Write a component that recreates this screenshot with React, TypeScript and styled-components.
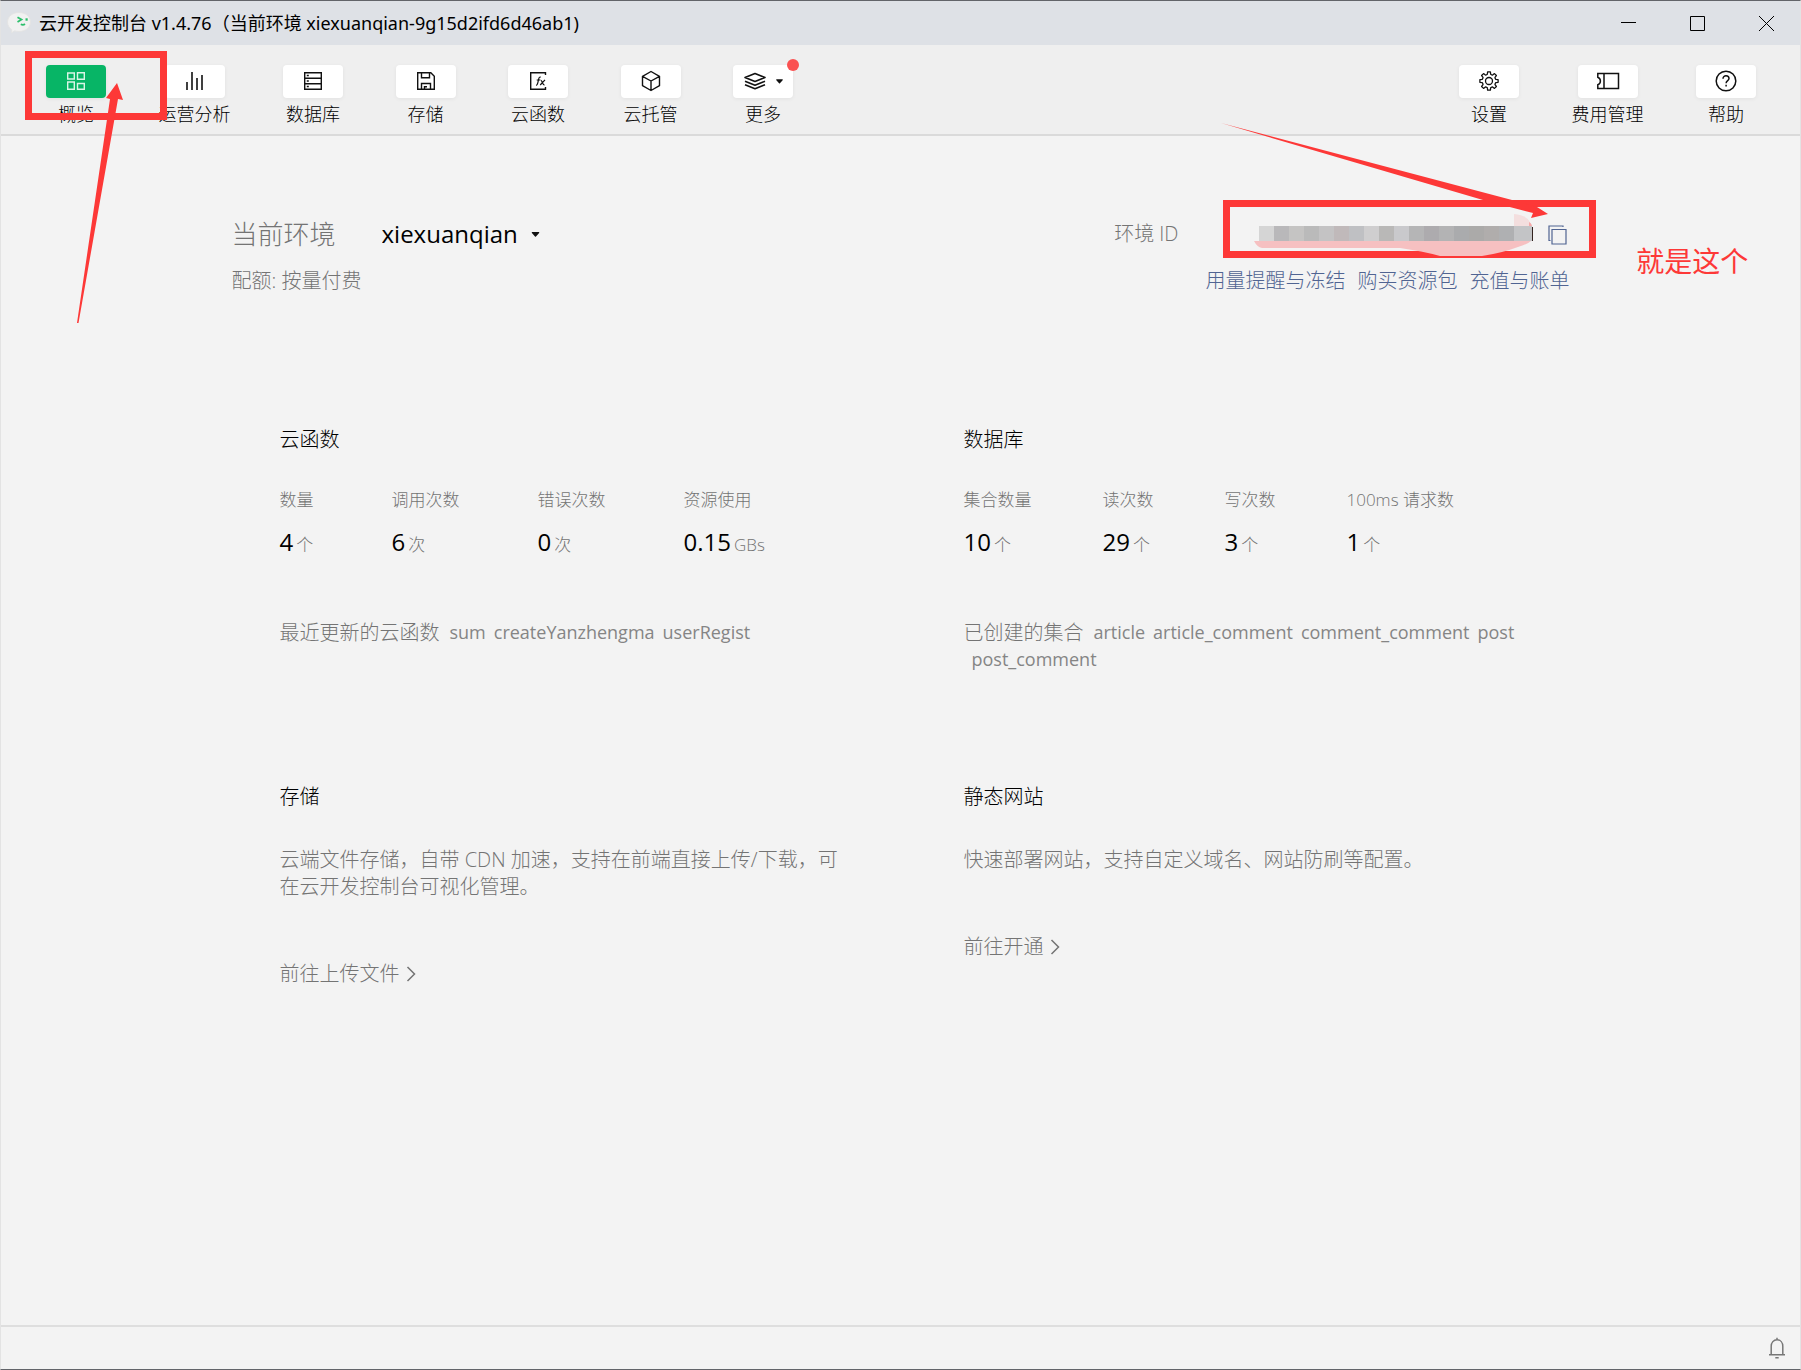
import React from "react";
import styled, { createGlobalStyle } from "styled-components";

const ink = "#000000";
const muted = "#747474";
const link = "#506492";
const mark = "#fd3837";

const GlobalStyle = createGlobalStyle`
  *, *::before, *::after { box-sizing: border-box; }
  body {
    margin: 0;
    background: #f3f3f3;
    color: ${ink};
    font-family: "Open Sans", "Noto Sans CJK SC", sans-serif;
    font-weight: 300;
  }
  button, select {
    border: 0;
    padding: 0;
    background: none;
    color: inherit;
    font: inherit;
    appearance: none;
  }
  h2, p, dl, dd { margin: 0; }
  svg { display: block; overflow: visible; }
`;

const Window = styled.div`
  position: relative;
  display: flex;
  flex-direction: column;
  min-height: 100vh;
  border: 1px solid #e3e3e3;
  border-top-color: #626469;
  border-bottom-color: #626469;
  overflow: hidden;
`;

const TitleBar = styled.header`
  display: flex;
  align-items: center;
  height: 44px;
  padding-left: 6px;
  background: #dee1e6;
`;

const WindowTitle = styled.span`
  flex: 1;
  margin-left: 8px;
  font-family: "Noto Sans", "Noto Sans CJK SC", sans-serif;
  font-size: 18px;
  line-height: 24px;
  font-weight: 400;
`;

const WindowControl = styled.button`
  display: grid;
  place-items: center;
  width: 69px;
  height: 44px;
`;

const WindowControls = styled.div`
  display: flex;
  margin-right: -1px;
`;

const Toolbar = styled.nav`
  position: relative;
  display: flex;
  justify-content: space-between;
  height: 91px;
  padding: 20px 44px 0 45px;
  background: #efefef;
  border-bottom: 2px solid #dadada;
`;

const ToolGroup = styled.div<{ $width: number }>`
  display: flex;
  justify-content: space-between;
  align-items: flex-start;
  flex: 0 0 ${(p) => p.$width}px;
`;

const Tool = styled.button`
  display: flex;
  flex-direction: column;
  align-items: center;
  gap: 4px;
  font-size: 18px;
  line-height: 24px;
`;

const ToolFace = styled.span<{ $active?: boolean }>`
  position: relative;
  display: flex;
  align-items: center;
  justify-content: center;
  gap: 10px;
  width: 60px;
  height: 33px;
  padding-bottom: 1px;
  border-radius: 4px;
  background: ${(p) => (p.$active ? "#07b566" : "#ffffff")};
  color: ${(p) => (p.$active ? "#d9f5e6" : "#111111")};
  box-shadow: 0 1px 4px rgba(0, 0, 0, 0.06);
`;

const Dot = styled.i`
  position: absolute;
  top: -6px;
  right: -6px;
  width: 12px;
  height: 12px;
  border-radius: 50%;
  background: #fa5151;
`;

const MarkBox = styled.div<{ $top: number; $left: number; $width: number; $height: number }>`
  position: absolute;
  top: ${(p) => p.$top}px;
  left: ${(p) => p.$left}px;
  width: ${(p) => p.$width}px;
  height: ${(p) => p.$height}px;
  border: 7px solid ${mark};
  pointer-events: none;
`;

const MarkArrow = styled.svg<{ $top: number; $left: number }>`
  position: absolute;
  z-index: 3;
  top: ${(p) => p.$top}px;
  left: ${(p) => p.$left}px;
  fill: ${mark};
  pointer-events: none;
`;

const MarkText = styled.span`
  position: absolute;
  top: 25px;
  left: 522px;
  color: ${mark};
  font-size: 28px;
  line-height: 40px;
  font-weight: 400;
  white-space: nowrap;
`;

const Main = styled.main`
  flex: 1;
  width: 100%;
  max-width: 1386px;
  margin: 0 auto;
  padding: 80px 24px 40px;
`;

const Summary = styled.section`
  display: flex;
  justify-content: space-between;
  color: ${muted};
`;

const SummaryColumn = styled.div<{ $end?: boolean }>`
  display: flex;
  flex-direction: column;
  align-items: ${(p) => (p.$end ? "flex-end" : "flex-start")};
  gap: 15px;
  font-size: 20px;
  line-height: 27px;
`;

const EnvRow = styled.div`
  display: flex;
  align-items: center;
  height: 36px;
`;

const EnvLabel = styled.label`
  margin-right: 46px;
  font-size: 26px;
`;

const EnvSelect = styled.select`
  margin-right: 12px;
  color: ${ink};
  font-size: 24px;
  line-height: 36px;
  font-weight: 400;
`;

const IdRow = styled.div`
  position: relative;
  display: flex;
  align-items: center;
  height: 36px;
  padding-right: 3px;
`;

const IdLabel = styled.span`
  margin: 0 80px 2px 0;
`;

const Redacted = styled.svg`
  position: relative;
  z-index: 2;
  margin: 0 15px 2px 0;
`;

const CopyButton = styled.button`
  position: relative;
  z-index: 2;
  margin-top: 2px;
  color: ${link};
`;

const Links = styled.div`
  display: flex;
  gap: 12px;
`;

const TextLink = styled.a`
  color: ${link};
  text-decoration: none;
`;

const Cards = styled.div`
  display: grid;
  grid-template-columns: 1fr 1fr;
  gap: 30px;
  margin-top: 84px;
`;

const Card = styled.section`
  display: flex;
  flex-direction: column;
  align-items: flex-start;
  padding: 48px 36px 32px 48px;
  color: ${muted};
  font-size: 20px;
  line-height: 27px;
`;

const CardTitle = styled.h2`
  margin-bottom: 36px;
  color: ${ink};
  font-size: 20px;
  line-height: 27px;
  font-weight: 300;
`;

const Stats = styled.dl<{ $gap: number }>`
  display: flex;
  gap: ${(p) => p.$gap}px;
  margin-bottom: 58px;
  font-size: 17px;
  white-space: nowrap;
`;

const StatLabel = styled.dt`
  line-height: 22px;
`;

const StatValue = styled.dd`
  display: flex;
  align-items: baseline;
  gap: 3px;
  margin-top: 15px;
  line-height: 32px;
`;

const StatNumber = styled.span`
  color: ${ink};
  font-size: 24px;
  font-weight: 400;
`;

const Recent = styled.ul`
  display: flex;
  flex-wrap: wrap;
  margin: 0;
  padding: 0;
  list-style: none;
`;

const RecentLabel = styled.li`
  margin-right: 2px;
`;

const RecentItem = styled.li`
  margin-left: 8px;
  color: #858585;
  font-size: 18px;
  font-weight: 400;
`;

const CardLink = styled.a`
  display: flex;
  align-items: center;
  gap: 6px;
  margin-top: 60px;
  color: inherit;
  text-decoration: none;
`;

const StatusBar = styled.footer`
  display: flex;
  align-items: center;
  justify-content: flex-end;
  height: 44px;
  padding-right: 14px;
  border-top: 2px solid #dedede;
  color: #777777;
`;

const Icon = ({ w = 20, h = 20, sw = 1.4, children }: { w?: number; h?: number; sw?: number; children: React.ReactNode }) => (
  <svg width={w} height={h} viewBox={`0 0 ${w} ${h}`} fill="none" stroke="currentColor" strokeWidth={sw} aria-hidden="true">
    {children}
  </svg>
);

const Caret = ({ w }: { w: number }) => (
  <svg width={w} height="5" viewBox="0 0 8 5" fill="#111" aria-hidden="true">
    <path d="M0.6 0h6.8q.8.4.2 1L4.5 4.6q-.5.5-1 0L.4 1q-.6-.6.2-1z" />
  </svg>
);

const Logo = () => (
  <svg width="24" height="22" viewBox="0 0 24 22" aria-hidden="true">
    <path d="M12 0.5c6.500 0 11.500 4 11.500 9.500s-5 9.500-11.500 9.500c-1.700 0-3-.2-4.300-.6L4.500 20.800l.2-3.200C2 16 .5 13.200.5 10 .5 4.500 5.500.5 12 .5z" fill="#f1f1f1" stroke="#e4e4e4" />
    <g fill="none" stroke="#2dbf6c" strokeWidth="1.800">
      <path d="M10.500 5.200l4 2.400-4 2.400M13.800 12.200q2.200 1.400 4.200-.2" />
      <path d="M18.500 7.500h2.200" strokeWidth="2.400" />
    </g>
  </svg>
);

const gearPath = (() => {
  const steps = 8;
  const points: string[] = [];
  for (let i = 0; i < steps; i++) {
    const a = (i * 2 * Math.PI) / steps;
    [[-0.24, 7], [-0.15, 9.2], [0.15, 9.2], [0.24, 7], [0.39, 6.7]].forEach(([d, r]) => {
      points.push(`${(10 + r * Math.sin(a + d)).toFixed(2)} ${(10 - r * Math.cos(a + d)).toFixed(2)}`);
    });
  }
  return `M${points.join("L")}z`;
})();

const icons = {
  overview: <Icon><path d="M1.700 2h6.600v6H1.700zM11.500 1.700h6.800v6.600h-6.800zM1.700 11h6.600v7.300H1.700zM11.500 12.500h6.800v5.800h-6.800z" /></Icon>,
  analysis: <Icon sw={1.6}><path d="M2 11v8M7 1v18M12 7v12M17 4v15" /></Icon>,
  database: <Icon sw={1.4}><path d="M1.700 1.700h16.600v16.600H1.700zM1.700 7.200h16.600M1.700 12.800h16.600M3.800 4.500h2M3.800 10h2M3.800 15.500h2" /></Icon>,
  storage: <Icon sw={1.4}><path d="M1.700 1.700h13.100l3.500 3.500v13.100H1.700zM5.500 1.700v5h8v-5M5.500 18.300v-5.800h9v5.800M8.500 18v-2.300h2.500" /></Icon>,
  functions: (
    <Icon w={18} sw={1.4}>
      <path d="M16.500 4V1.700H1.700v16.600h14.800V16" />
      <path strokeWidth="1.200" d="M7 14.500c1.400 0 1.500-1.300 1.800-2.700l.9-4c.3-1.200.8-2 2-1.700M7.700 9h3.300M11.500 9c1.700-.2 1.800 5.200 4 4.800M16 8.800l-4.800 5.200" />
    </Icon>
  ),
  hosting: <Icon sw={1.4}><path strokeLinejoin="round" d="M10 .5l8.500 4.800v9.400L10 19.500l-8.500-4.800V5.300zM1.500 5.300L10 10l8.500-4.700M10 10v9.500" /></Icon>,
  more: <Icon w={22} h={18} sw={1.6}><path strokeLinejoin="round" d="M11 1.500l10 4-10 4-10-4zM1 9.300l10 4 10-4M1 12.700l10 4 10-4" /></Icon>,
  settings: <Icon sw={1.3}><path strokeLinejoin="round" d={gearPath} /><circle cx="10" cy="10" r="3.500" /></Icon>,
  billing: <Icon w={24} h={18} sw={1.5}><path d="M1.800 1.500h20.700v15H1.800v-3.700q2.600-1 2.600-3.800T1.800 5.200zM8 1.500v15" /></Icon>,
  help: <Icon w={22} h={22} sw={1.5}><circle cx="11" cy="11" r="9.800" /><path d="M8 8.700C8 4.800 14 5 14 8.600c0 2-2.900 2.200-2.900 4.700M11.100 14.800v1.800" /></Icon>,
};

const leftTools = [
  { label: "概览", icon: icons.overview, active: true },
  { label: "运营分析", icon: icons.analysis },
  { label: "数据库", icon: icons.database },
  { label: "存储", icon: icons.storage },
  { label: "云函数", icon: icons.functions },
  { label: "云托管", icon: icons.hosting },
  { label: "更多", icon: icons.more, menu: true },
];

const rightTools = [
  { label: "设置", icon: icons.settings },
  { label: "费用管理", icon: icons.billing },
  { label: "帮助", icon: icons.help },
];

type ToolData = { label: string; icon: React.ReactNode; active?: boolean; menu?: boolean };

const Tools = ({ items, width }: { items: ToolData[]; width: number }) => (
  <ToolGroup $width={width}>
    {items.map((t) => (
      <Tool key={t.label} type="button">
        <ToolFace $active={t.active}>
          {t.icon}
          {t.menu && <Caret w={7} />}
          {t.menu && <Dot />}
        </ToolFace>
        {t.label}
      </Tool>
    ))}
  </ToolGroup>
);

const StatList = ({ gap, items }: { gap: number; items: string[][] }) => (
  <Stats $gap={gap}>
    {items.map(([label, value, unit]) => (
      <div key={label}>
        <StatLabel>{label}</StatLabel>
        <StatValue>
          <StatNumber>{value}</StatNumber>
          {unit}
        </StatValue>
      </div>
    ))}
  </Stats>
);

const RecentList = ({ label, items }: { label: string; items: string[] }) => (
  <Recent>
    <RecentLabel>{label}</RecentLabel>
    {items.map((n) => (
      <RecentItem key={n}>{n}</RecentItem>
    ))}
  </Recent>
);

const Chevron = () => (
  <Icon w={10} h={16} sw={1.5}>
    <path d="M1.500 1l7 7-7 7" />
  </Icon>
);

const tiles = ["#d5d5d5", "#b9b8ba", "#c5c4c3", "#bababa", "#c4c3c4", "#c0b9ba", "#bfc0c3", "#cfcecf", "#b9b8b7", "#c9c9cc", "#b5b5b6", "#adabae", "#b3b3b4", "#aaabad", "#abaaa9", "#b0adac", "#afb0b2", "#c3c4c6"];

export default function App() {
  return (
    <>
      <GlobalStyle />
      <Window>
        <TitleBar>
          <Logo />
          <WindowTitle>云开发控制台 v1.4.76（当前环境 xiexuanqian-9g15d2ifd6d46ab1)</WindowTitle>
          <WindowControls>
            <WindowControl type="button" aria-label="最小化">
              <Icon w={15} h={15} sw={1}><path d="M0 6.500h15" stroke="#000" /></Icon>
            </WindowControl>
            <WindowControl type="button" aria-label="最大化">
              <Icon w={15} h={15} sw={1}><path d="M.5 .5h14v14H.5z" /></Icon>
            </WindowControl>
            <WindowControl type="button" aria-label="关闭">
              <Icon w={15} h={15} sw={1}><path d="M0 0l15 15M15 0L0 15" /></Icon>
            </WindowControl>
          </WindowControls>
        </TitleBar>

        <Toolbar>
          <Tools items={leftTools} width={747} />
          <Tools items={rightTools} width={297} />
          <MarkBox $top={6} $left={24} $width={142} $height={69} />
          <MarkArrow $top={38} $left={76} width="47" height="240" viewBox="0 0 47 240">
            <path d="M0 240L33 16l-4-1L40 0l6 17-5-1L1.500 240z" />
          </MarkArrow>
        </Toolbar>

        <Main>
          <Summary>
            <SummaryColumn>
              <EnvRow>
                <EnvLabel htmlFor="env">当前环境</EnvLabel>
                <EnvSelect id="env" defaultValue="xiexuanqian">
                  <option>xiexuanqian</option>
                </EnvSelect>
                <Caret w={9} />
              </EnvRow>
              <div>配额: 按量付费</div>
            </SummaryColumn>
            <SummaryColumn $end>
              <IdRow>
                <MarkBox $top={-16} $left={109} $width={373} $height={58} />
                <MarkText>就是这个</MarkText>
                <IdLabel>环境 ID</IdLabel>
                <Redacted width="274" height="15" viewBox="0 0 274 15" aria-hidden="true">
                  <path d="M255-12q16 1 18 14v8l-18-4z" fill="#f3dede" />
                  <path d="M270-4q4 2 3 8h-3z" fill="#f6a9a9" />
                  <path d="M-5 15q3 6 8 7h138q22 3 40 8h42q20-3 36-9 10-3 13-6z" fill="#f6c0c1" />
                  {tiles.map((c, i) => (
                    <rect key={i} x={i * 15} width={i === 17 ? 18 : 15} height="15" fill={c} />
                  ))}
                  <path d="M273.500 1v14" stroke="#33231f" />
                </Redacted>
                <CopyButton type="button" aria-label="复制">
                  <Icon w={19} h={20} sw={1.2}>
                    <path d="M4 4.500h14v14.500H4z" />
                    <path d="M15 2V1H1v14.500h1.500" />
                  </Icon>
                </CopyButton>
                <MarkArrow $top={-93} $left={107} width="328" height="96" viewBox="0 0 328 96">
                  <path d="M0 0L291 77l25 7 11 7-17 4 2-5-50-13z" />
                </MarkArrow>
              </IdRow>
              <Links>
                <TextLink href="#quota">用量提醒与冻结</TextLink>
                <TextLink href="#buy">购买资源包</TextLink>
                <TextLink href="#billing">充值与账单</TextLink>
              </Links>
            </SummaryColumn>
          </Summary>

          <Cards>
            <Card>
              <CardTitle>云函数</CardTitle>
              <StatList gap={78} items={[["数量", "4", "个"], ["调用次数", "6", "次"], ["错误次数", "0", "次"], ["资源使用", "0.15", "GBs"]]} />
              <RecentList label="最近更新的云函数" items={["sum", "createYanzhengma", "userRegist"]} />
            </Card>
            <Card>
              <CardTitle>数据库</CardTitle>
              <StatList gap={71} items={[["集合数量", "10", "个"], ["读次数", "29", "个"], ["写次数", "3", "个"], ["100ms 请求数", "1", "个"]]} />
              <RecentList label="已创建的集合" items={["article", "article_comment", "comment_comment", "post", "post_comment"]} />
            </Card>
            <Card>
              <CardTitle>存储</CardTitle>
              <p>云端文件存储，自带 CDN 加速，支持在前端直接上传/下载，可在云开发控制台可视化管理。</p>
              <CardLink href="#upload">前往上传文件<Chevron /></CardLink>
            </Card>
            <Card>
              <CardTitle>静态网站</CardTitle>
              <p>快速部署网站，支持自定义域名、网站防刷等配置。</p>
              <CardLink href="#open">前往开通<Chevron /></CardLink>
            </Card>
          </Cards>
        </Main>

        <StatusBar>
          <button type="button" aria-label="通知">
            <Icon w={18} h={22} sw={1.500}>
              <path d="M3.200 17.500V9.300C3.200 5.500 5.600 2.800 9 2.800s5.800 2.700 5.800 6.500v8.200M1 17.700h16M9 .8v2M7.300 20.700h3.400" />
            </Icon>
          </button>
        </StatusBar>
      </Window>
    </>
  );
}
